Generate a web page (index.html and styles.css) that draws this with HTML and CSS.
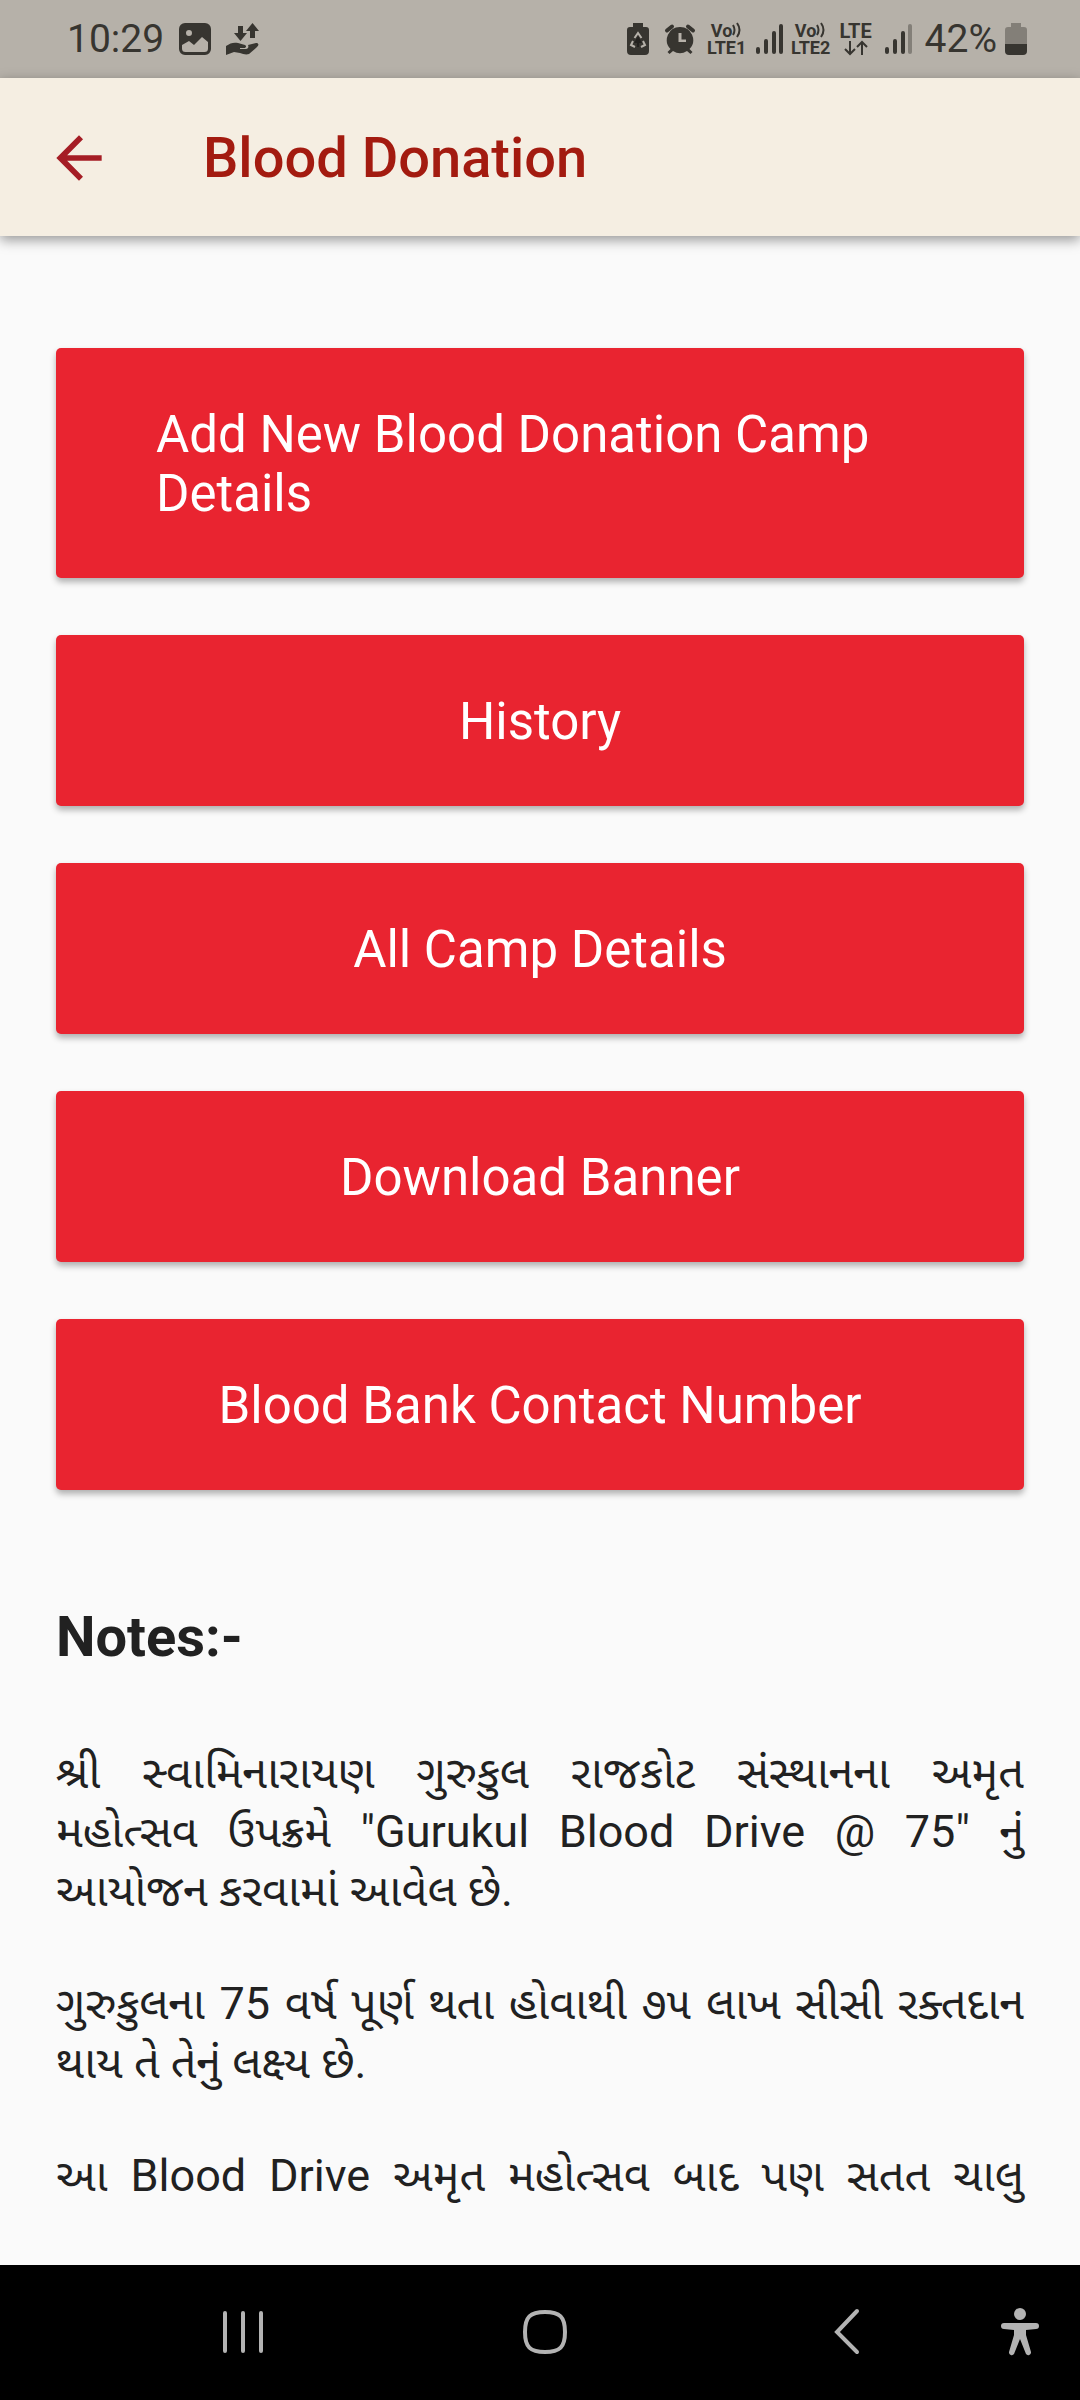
FILE: index.html
```html
<!DOCTYPE html>
<html lang="en">
  <head>
    <meta charset="utf-8" />
    <meta name="viewport" content="width=device-width, initial-scale=1" />
    <title>Blood Donation</title>
    <link rel="stylesheet" href="styles.css">
  </head>

  <body>
    <div class="status-bar">
      <div class="status-left">
        <span class="clock">10:29</span>
        <svg width="32" height="32" viewBox="0 0 32 32">
          <path fill-rule="evenodd" d="M6 0h20a6 6 0 0 1 6 6v20a6 6 0 0 1-6 6H6a6 6 0 0 1-6-6V6a6 6 0 0 1 6-6zM10 7a3 3 0 1 0 0 6a3 3 0 0 0 0-6zM3 22v3.500a3.500 3.500 0 0 0 3.500 3.500h19a3.500 3.500 0 0 0 3.500-3.500V19l-6-5l-8 8l-5-4z" />
        </svg>
        <svg width="34" height="32" viewBox="0 0 34 32">
          <path d="M12 3h5v7h4l-6.500 8L8 10h4zM24 15V8h-4l6.500-8L33 8h-4v7z" />
          <path d="M0 23c4-3 8-4 12-3l7 2c2 1 1 3-1 3h-4v1h6c2 0 3-2 2-4l8-2c3 0 3 2 1 4l-8 7c-3 1-6 0-9-1l-6-1l-8 3z" />
        </svg>
      </div>

      <div class="status-right">
        <svg width="30" height="32" viewBox="0 0 30 32">
          <path d="M10 0h10v4h3a3 3 0 0 1 3 3v21a4 4 0 0 1-4 4H8a4 4 0 0 1-4-4V7a3 3 0 0 1 3-3h3z" />
          <path class="recycle" d="M11.500 15l3.500-5l3.500 5M20 18l2 4l-4 2M12 24l-4-2l2-4" />
          <path class="recycle-fill" d="M15 13l4 7h-3v4h-2v-4h-3z" />
        </svg>
        <svg width="38" height="32" viewBox="0 0 38 32">
          <path fill-rule="evenodd" d="M19 4a13 13 0 0 1 9.500 22l3 3l-2 2l-3.500-3a13 13 0 0 1-14 0l-3.500 3l-2-2l3-3A13 13 0 0 1 19 4zM17.500 10v9H25v-2.500h-4.500V10z" />
          <path class="alarm-bell" d="M6 7.500l5-4M32 7.500l-5-4" />
        </svg>
        <span class="volte">
          <span class="volte-top">Vo<svg width="10" height="16" viewBox="0 0 10 16"><path d="M1 3q3 5 0 10M5 1q5 7 0 14" /></svg></span>
          <span>LTE1</span>
        </span>
        <svg class="signal" width="28" height="32" viewBox="0 0 28 32">
          <path d="M3 26v3M11 18v11M19 10v19M26 3v26" />
        </svg>
        <span class="volte">
          <span class="volte-top">Vo<svg width="10" height="16" viewBox="0 0 10 16"><path d="M1 3q3 5 0 10M5 1q5 7 0 14" /></svg></span>
          <span>LTE2</span>
        </span>
        <span class="lte">
          <span>LTE</span>
          <svg width="24" height="16" viewBox="0 0 24 16">
            <path d="M6 1v13M1 9l5 5l5-5M18 15V2M13 7l5-5l5 5" />
          </svg>
        </span>
        <svg class="signal" width="36" height="32" viewBox="0 0 36 32">
          <path d="M6 26v3M14 18v11M22 10v19" />
          <path class="faded" d="M29 3v26" />
        </svg>
        <span class="percent">42%</span>
        <svg width="22" height="32" viewBox="0 0 22 32">
          <path class="faded" d="M6 0h10v4h3a3 3 0 0 1 3 3v14H0V7a3 3 0 0 1 3-3h3z" />
          <path d="M0 21h22v7a4 4 0 0 1-4 4H4a4 4 0 0 1-4-4z" />
        </svg>
      </div>
    </div>

    <header class="app-bar">
      <button class="back" type="button" aria-label="Back">
        <svg width="68" height="68" viewBox="0 0 24 24">
          <path d="M20 11H7.830l5.590-5.590L12 4l-8 8l8 8l1.410-1.410L7.830 13H20v-2z" />
        </svg>
      </button>
      <h1>Blood Donation</h1>
    </header>

    <main>
      <div class="menu">
        <button type="button"><span>Add New Blood Donation Camp Details</span></button>
        <button type="button"><span>History</span></button>
        <button type="button"><span>All Camp Details</span></button>
        <button type="button"><span>Download Banner</span></button>
        <button type="button"><span>Blood Bank Contact Number</span></button>
      </div>

      <h2>Notes:-</h2>
      <div class="notes" lang="gu">
        <p>શ્રી સ્વામિનારાયણ ગુરુકુલ રાજકોટ સંસ્થાનના અમૃત મહોત્સવ&nbsp;ઉપક્રમે "Gurukul Blood Drive @ 75" નું આયોજન કરવામાં આવેલ છે.</p>
        <p>ગુરુકુલના 75 વર્ષ પૂર્ણ થતા હોવાથી ૭૫ લાખ સીસી રક્તદાન થાય તે તેનું લક્ષ્ય છે.</p>
        <p class="continued">આ Blood Drive અમૃત મહોત્સવ બાદ પણ સતત ચાલુ</p>
      </div>
    </main>

    <nav class="nav-bar">
      <button type="button" aria-label="Recent apps">
        <svg width="48" height="48" viewBox="0 0 48 48"><path d="M6 5v38M24 5v38M42 5v38" /></svg>
      </button>
      <button type="button" aria-label="Home">
        <svg width="48" height="48" viewBox="0 0 48 48"><path d="M24 4C39 4 44 9 44 24S39 44 24 44S4 39 4 24S9 4 24 4z" /></svg>
      </button>
      <button type="button" aria-label="Back">
        <svg width="48" height="48" viewBox="0 0 48 48"><path d="M34 3L14 24L34 44" /></svg>
      </button>
      <button type="button" aria-label="Accessibility">
        <svg class="person" width="40" height="48" viewBox="0 0 40 48">
          <circle cx="20" cy="6" r="6" />
          <path d="M4 15h32a3 3 0 0 1 0 6l-10 1v5l5 17a2.800 2.800 0 0 1-5 2L20 31l-6 15a2.800 2.800 0 0 1-5-2l5-17v-5L4 21a3 3 0 0 1 0-6z" />
        </svg>
      </button>
    </nav>
  </body>
</html>
```
FILE: styles.css
```css
* {
  box-sizing: border-box;
}

body {
  background-color: #fafafa;
  color: #212121;
  display: flex;
  flex-direction: column;
  font-family: Roboto, "Noto Sans Gujarati", "Noto Sans", sans-serif;
  margin: 0;
  min-height: 100vh;
}

button {
  border: 0;
  cursor: pointer;
  font-family: inherit;
}

svg {
  display: block;
  flex: none;
}

/* status bar */

.status-bar {
  align-items: center;
  background-color: #b6b1a9;
  color: #373530;
  display: flex;
  fill: #373530;
  font-size: 39px;
  height: 78px;
  justify-content: space-between;
  line-height: 48px;
  padding: 0 53px 0 67px;
}

.status-left,
.status-right {
  align-items: center;
  display: flex;
}

.status-left {
  gap: 15px;
}

.status-right {
  gap: 8px;
}

.recycle,
.alarm-bell {
  fill: none;
  stroke: #b6b1a9;
  stroke-width: 2;
}

.recycle-fill {
  fill: #24221f;
}

.alarm-bell {
  stroke: #373530;
  stroke-linecap: round;
  stroke-width: 4;
}

.volte,
.lte {
  align-items: center;
  display: flex;
  flex-direction: column;
  font-size: 18px;
  font-weight: 700;
  line-height: 17px;
  width: 40px;
}

.volte-top {
  display: flex;
}

.volte svg,
.lte svg {
  fill: none;
  stroke: #373530;
  stroke-width: 2;
}

.lte {
  font-size: 20px;
  width: 34px;
}

.signal {
  fill: none;
  stroke: #373530;
  stroke-linecap: round;
  stroke-width: 4;
}

.faded {
  opacity: 0.4;
}

/* app bar */

.app-bar {
  align-items: center;
  background-color: #f5eee2;
  box-shadow: 0 4px 12px rgba(0, 0, 0, 0.4);
  display: flex;
  gap: 90px;
  height: 158px;
  padding: 2px 45px 0;
}

.back {
  background: none;
  fill: #a51d25;
  padding: 0;
}

h1 {
  color: #a31b10;
  font-size: 56px;
  font-weight: 500;
  line-height: 64px;
  margin: 0;
}

/* content */

main {
  padding: 112px 56px 56px;
}

.menu {
  display: flex;
  flex-direction: column;
  gap: 57px;
}

.menu button {
  align-items: center;
  background-color: #e92430;
  border-radius: 5px;
  box-shadow: 0 4px 6px rgba(0, 0, 0, 0.3);
  color: #fff;
  display: flex;
  font-size: 51px;
  justify-content: center;
  line-height: 59px;
  padding: 57px 100px 55px;
  text-align: left;
}

h2 {
  font-size: 56px;
  font-weight: 700;
  line-height: 66px;
  margin: 114px 0 73px;
}

.notes {
  font-size: 45px;
  line-height: 59px;
  text-align: justify;
}

.notes p {
  margin: 0 0 54px;
}

.notes .continued {
  margin: 0;
  text-align-last: justify;
}

/* navigation bar */

.nav-bar {
  align-items: center;
  background-color: #000;
  display: grid;
  grid-template-columns: 1fr 1fr 1fr 44px;
  height: 135px;
  margin-top: auto;
  padding: 0 38px 2px 92px;
}

.nav-bar button {
  background: none;
  display: flex;
  justify-content: center;
  padding: 0;
}

.nav-bar svg {
  fill: none;
  stroke: #b3b3b3;
  stroke-linecap: round;
  stroke-width: 4;
}

.nav-bar .person {
  fill: #b3b3b3;
  stroke: none;
}
```
